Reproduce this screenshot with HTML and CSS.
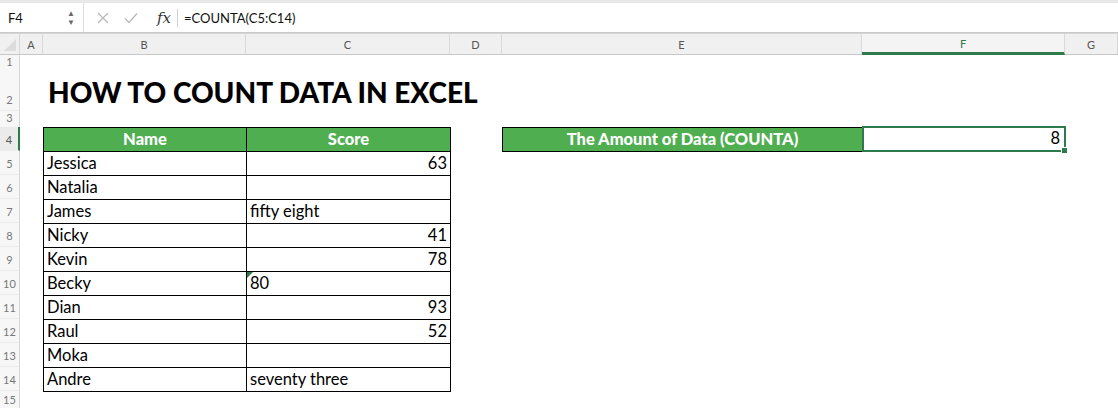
FILE: index.html
```html
<!DOCTYPE html>
<html lang="en">
<head>
  <meta charset="UTF-8">
  <title>How to count data in Excel</title>
  <link rel="stylesheet" href="styles.css">
</head>
<body>
  <!-- Formula bar -->
  <div class="formula-bar">
    <div class="name-box">F4</div>
    <div class="spinner"><span>&#9650;</span><span>&#9660;</span></div>
    <div class="bar-icons">
      <svg class="ico" width="12" height="12" viewBox="0 0 12 12"><path d="M1 1L11 11M11 1L1 11" stroke="#b9b9b9" stroke-width="1.3" fill="none"/></svg>
      <svg class="ico" width="14" height="12" viewBox="0 0 14 12"><path d="M1 6.5L5 10.5L13 1.5" stroke="#b9b9b9" stroke-width="1.3" fill="none"/></svg>
      <span class="fx">fx</span>
    </div>
    <div class="formula">=COUNTA(C5:C14)</div>
  </div>

  <!-- Sheet -->
  <div class="sheet">
    <div class="row col-head">
      <div class="corner"><svg width="14" height="14" viewBox="0 0 14 14"><path d="M13 1V13H1Z" fill="#dcdcdc"/></svg></div>
      <div class="ch">A</div>
      <div class="ch">B</div>
      <div class="ch">C</div>
      <div class="ch">D</div>
      <div class="ch">E</div>
      <div class="ch active">F</div>
      <div class="ch">G</div>
    </div>

    <div class="row r1"><div class="rh">1</div></div>
    <div class="row r2">
      <div class="rh">2</div>
      <div class="title">HOW TO COUNT DATA IN EXCEL</div>
    </div>
    <div class="row r3"><div class="rh">3</div></div>

    <div class="row">
      <div class="rh active">4</div>
      <div class="cell b t head">Name</div>
      <div class="cell c t head">Score</div>
      <div class="cell e t head">The Amount of Data (COUNTA)</div>
      <div class="cell f selected num">8<span class="handle"></span></div>
    </div>
    <div class="row">
      <div class="rh">5</div>
      <div class="cell b t">Jessica</div>
      <div class="cell c t num">63</div>
    </div>
    <div class="row">
      <div class="rh">6</div>
      <div class="cell b t">Natalia</div>
      <div class="cell c t"></div>
    </div>
    <div class="row">
      <div class="rh">7</div>
      <div class="cell b t">James</div>
      <div class="cell c t">fifty eight</div>
    </div>
    <div class="row">
      <div class="rh">8</div>
      <div class="cell b t">Nicky</div>
      <div class="cell c t num">41</div>
    </div>
    <div class="row">
      <div class="rh">9</div>
      <div class="cell b t">Kevin</div>
      <div class="cell c t num">78</div>
    </div>
    <div class="row">
      <div class="rh">10</div>
      <div class="cell b t">Becky</div>
      <div class="cell c t warn">80</div>
    </div>
    <div class="row">
      <div class="rh">11</div>
      <div class="cell b t">Dian</div>
      <div class="cell c t num">93</div>
    </div>
    <div class="row">
      <div class="rh">12</div>
      <div class="cell b t">Raul</div>
      <div class="cell c t num">52</div>
    </div>
    <div class="row">
      <div class="rh">13</div>
      <div class="cell b t">Moka</div>
      <div class="cell c t"></div>
    </div>
    <div class="row">
      <div class="rh">14</div>
      <div class="cell b t">Andre</div>
      <div class="cell c t">seventy three</div>
    </div>
    <div class="row r15"><div class="rh">15</div></div>
  </div>
</body>
</html>
```

FILE: styles.css
```css
body {
  margin: 0;
  font-family: 'Lato', 'Open Sans', sans-serif;
  background: #ffffff;
  width: 1118px;
  height: 408px;
  overflow: hidden;
}

/* Formula bar */
.formula-bar {
  display: flex;
  align-items: center;
  height: 29px;
  border-top: 3px solid #e8e8e8;
  border-bottom: 1px solid #c9c9c9;
  font-size: 13px;
  color: #111;
}

.name-box {
  width: 59px;
  padding-left: 8px;
}

.spinner {
  display: flex;
  flex-direction: column;
  justify-content: center;
  width: 12px;
  height: 29px;
  padding-right: 4px;
  font-size: 8px;
  line-height: 9px;
  color: #6a6a6a;
  border-right: 1px solid #dcdcdc;
}

.bar-icons {
  display: flex;
  align-items: center;
  gap: 15px;
  padding-left: 13px;
  padding-right: 6px;
  height: 18px;
  border-right: 1px solid #d0d0d0;
}

.fx {
  font-family: 'DejaVu Serif', serif;
  font-style: italic;
  font-size: 15px;
  color: #333;
  margin-left: 4px;
}

.formula {
  padding-left: 6px;
}

/* Sheet grid */
.sheet {
  border-top: 1px solid #d6d6d6;
}

.row {
  display: grid;
  grid-template-columns: 20px 23px 203px 204px 52px 360px 203px 1fr;
  height: 24px;
}

.col-head {
  height: 20px;
  background: #f0f0f0;
  border-bottom: 1px solid #c8c8c8;
}

.corner {
  display: flex;
  align-items: flex-end;
  justify-content: flex-end;
  padding: 0 2px 2px 0;
  border-right: 1px solid #d6d6d6;
}

.ch {
  display: flex;
  align-items: center;
  justify-content: center;
  font-size: 11px;
  color: #555;
  border-right: 1px solid #d9d9d9;
}

.ch.active {
  background: #f4f4f4;
  color: #2f7a4a;
  border-bottom: 3px solid #2f7a4a;
  margin-bottom: -1px;
}

.r1 { height: 17px; }
.r2 { height: 39px; }
.r3 { height: 16px; }
.r15 { height: 20px; }

.rh {
  grid-column: 1;
  display: flex;
  align-items: flex-end;
  justify-content: center;
  padding-bottom: 4px;
  font-size: 11px;
  color: #777;
  background: #f7f7f7;
  border-right: 1px solid #d6d6d6;
  border-bottom: 1px solid #ececec;
  box-sizing: border-box;
}

.rh.active {
  background: #ebebeb;
  color: #555;
  border-right: 2px solid #2f7a4a;
}

.title {
  grid-column: 3 / 6;
  align-self: center;
  padding-left: 5px;
  font-size: 28px;
  font-weight: 900;
  color: #000;
}

/* Cells */
.cell {
  display: flex;
  align-items: flex-end;
  padding: 0 3px 2px 3px;
  font-size: 16.5px;
  color: #000;
  position: relative;
}

.b { grid-column: 3; }
.c { grid-column: 4; }
.e { grid-column: 6; }
.f { grid-column: 7; }

.t {
  border: 1px solid #000;
  margin-right: -1px;
  margin-bottom: -1px;
}

.num { justify-content: flex-end; }

.head {
  background: #4fae50;
  color: #ffffff;
  font-weight: 900;
  justify-content: center;
}

.selected {
  border: 2px solid #2e7a4c;
  margin: -1px -1px -1px 0;
  padding-right: 4px;
}

.handle {
  position: absolute;
  right: -4px;
  bottom: -4px;
  width: 5px;
  height: 5px;
  background: #2e7a4c;
  border: 1px solid #fff;
}

.warn::before {
  content: "";
  position: absolute;
  top: 0;
  left: 0;
  border-top: 6px solid #2e7a4c;
  border-right: 6px solid transparent;
}
```
